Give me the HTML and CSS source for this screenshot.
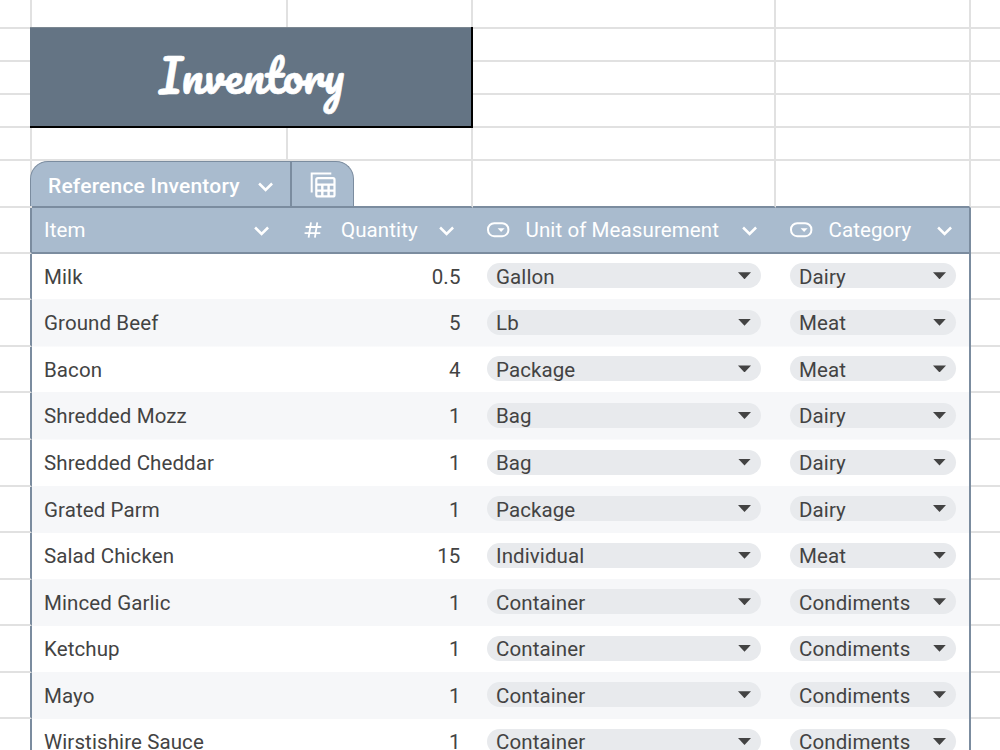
FILE: index.html
```html
<!DOCTYPE html>
<html lang="en">
<head>
    <meta charset="UTF-8">
    <meta name="viewport" content="width=device-width, initial-scale=1.0">
    <title>Inventory</title>
    <link rel="stylesheet" href="styles.css">
</head>
<body>
    <svg class="symbols">
        <symbol id="chevron" viewBox="0 0 16 16"><path d="M1.1 4.5l6.5 6.5 6.5-6.5" fill="none" stroke="#fff" stroke-width="2.5"/></symbol>
        <symbol id="dropdown" viewBox="0 0 24 16"><rect x="1" y="1.2" width="20.4" height="13" rx="6.2" fill="none" stroke="#fff" stroke-width="2"/><path d="M10.6 6.2h7l-3.5 3.8z" fill="#fff"/></symbol>
    </svg>

    <div class="sheet">
        <div class="row top">
            <div class="cell"></div><div class="cell"></div><div class="cell"></div><div class="cell"></div><div class="cell"></div><div class="cell"></div>
        </div>
        <div class="row banner">
            <div class="cell"></div><div class="title"><h1>Inventory</h1></div><div class="cell"></div><div class="cell"></div><div class="cell last"></div>
            <div class="cell"></div><div class="cell"></div><div class="cell"></div><div class="cell last"></div>
            <div class="cell"></div><div class="cell"></div><div class="cell"></div><div class="cell last"></div>
        </div>
        <div class="row spacer">
            <div class="cell"></div><div class="cell"></div><div class="cell"></div><div class="cell"></div><div class="cell"></div><div class="cell"></div>
        </div>
        <div class="row tabs">
            <div class="cell"></div>
            <div class="cell tab-cell">
                <div class="tab">
                    <div class="tab-name">Reference Inventory <svg class="chevron"><use href="#chevron"/></svg></div>
                    <div class="tab-icon">
                        <svg width="28" height="28" viewBox="0 0 28 28" fill="none" stroke="#fff">
                            <path d="M2.7 21.5V2.4h19.6" stroke-width="2"/>
                            <rect x="7.3" y="7.2" width="18.2" height="18.2" rx="1.5" stroke-width="2.2"/>
                            <path d="M7 13.6h19M7 19.6h19M13.3 13.5v12M19.6 13.5v12" stroke-width="2.4"/>
                        </svg>
                    </div>
                </div>
            </div>
            <div class="cell"></div><div class="cell"></div><div class="cell"></div>
        </div>

        <div class="row head">
            <div class="cell"></div>
            <div class="th item">Item <svg class="chevron"><use href="#chevron"/></svg></div>
            <div class="th quantity">
                <svg class="hash" viewBox="0 0 18 16" fill="none" stroke="#fff" stroke-width="1.8"><path d="M1.6 5h15.7M.6 11.2h15.7M7 .4L4.6 15.6M13.3.4l-2.4 15.2"/></svg>
                <span>Quantity</span> <svg class="chevron"><use href="#chevron"/></svg>
            </div>
            <div class="th unit"><svg class="dropdown"><use href="#dropdown"/></svg><span>Unit of Measurement</span> <svg class="chevron"><use href="#chevron"/></svg></div>
            <div class="th category"><svg class="dropdown"><use href="#dropdown"/></svg><span>Category</span> <svg class="chevron"><use href="#chevron"/></svg></div>
            <div class="cell"></div>
        </div>

        <div class="row data">
            <div class="cell"></div><div class="name">Milk</div><div class="number">0.5</div>
            <div class="select"><span class="chip">Gallon</span></div><div class="select"><span class="chip">Dairy</span></div><div class="cell"></div>
        </div>
        <div class="row data striped">
            <div class="cell"></div><div class="name">Ground Beef</div><div class="number">5</div>
            <div class="select"><span class="chip">Lb</span></div><div class="select"><span class="chip">Meat</span></div><div class="cell"></div>
        </div>
        <div class="row data">
            <div class="cell"></div><div class="name">Bacon</div><div class="number">4</div>
            <div class="select"><span class="chip">Package</span></div><div class="select"><span class="chip">Meat</span></div><div class="cell"></div>
        </div>
        <div class="row data striped">
            <div class="cell"></div><div class="name">Shredded Mozz</div><div class="number">1</div>
            <div class="select"><span class="chip">Bag</span></div><div class="select"><span class="chip">Dairy</span></div><div class="cell"></div>
        </div>
        <div class="row data">
            <div class="cell"></div><div class="name">Shredded Cheddar</div><div class="number">1</div>
            <div class="select"><span class="chip">Bag</span></div><div class="select"><span class="chip">Dairy</span></div><div class="cell"></div>
        </div>
        <div class="row data striped">
            <div class="cell"></div><div class="name">Grated Parm</div><div class="number">1</div>
            <div class="select"><span class="chip">Package</span></div><div class="select"><span class="chip">Dairy</span></div><div class="cell"></div>
        </div>
        <div class="row data">
            <div class="cell"></div><div class="name">Salad Chicken</div><div class="number">15</div>
            <div class="select"><span class="chip">Individual</span></div><div class="select"><span class="chip">Meat</span></div><div class="cell"></div>
        </div>
        <div class="row data striped">
            <div class="cell"></div><div class="name">Minced Garlic</div><div class="number">1</div>
            <div class="select"><span class="chip">Container</span></div><div class="select"><span class="chip">Condiments</span></div><div class="cell"></div>
        </div>
        <div class="row data">
            <div class="cell"></div><div class="name">Ketchup</div><div class="number">1</div>
            <div class="select"><span class="chip">Container</span></div><div class="select"><span class="chip">Condiments</span></div><div class="cell"></div>
        </div>
        <div class="row data striped">
            <div class="cell"></div><div class="name">Mayo</div><div class="number">1</div>
            <div class="select"><span class="chip">Container</span></div><div class="select"><span class="chip">Condiments</span></div><div class="cell"></div>
        </div>
        <div class="row data">
            <div class="cell"></div><div class="name">Wirstishire Sauce</div><div class="number">1</div>
            <div class="select"><span class="chip">Container</span></div><div class="select"><span class="chip">Condiments</span></div><div class="cell"></div>
        </div>
    </div>
</body>
</html>
```
FILE: styles.css
```css
body {
    margin: 0;
    height: 100vh;
    overflow: hidden;
    background: white;
    font-family: Roboto, "Liberation Sans", sans-serif;
    font-size: 20.5px;
    letter-spacing: 0.1px;
    color: #434343;
}

.symbols {
    display: none;
}

.sheet {
    width: 1000px;
}

.row {
    display: grid;
    grid-template-columns: 32px 256px 185px 303px 195px 29px;
}

.cell {
    box-sizing: border-box;
    border-right: 2px solid #e1e1e1;
    border-bottom: 2px solid #e1e1e1;
}

.row .cell:last-child,
.row .cell.last {
    border-right: none;
}

.top {
    height: 29px;
}

.banner {
    grid-template-rows: 33px 33px 33px;
}

.spacer {
    height: 33px;
}

/* merged title cell */
.title {
    grid-row: 1 / 4;
    grid-column: 2 / 4;
    position: relative;
    margin: -2px 0 0 -2px;
    background: #647484;
    box-shadow: inset 0 1px #7b8791;
    border-right: 2px solid #000;
    border-bottom: 2px solid #000;
    display: flex;
    justify-content: center;
    align-items: center;
}

.title h1 {
    margin: 0 0 1px 2px;
    color: white;
    font-family: Pacifico, Lato, cursive;
    font-size: 45.3px;
    font-weight: 400;
    letter-spacing: 0;
    line-height: 1;
    -webkit-text-stroke: 0.6px white;
}

/* table tab */
.tabs {
    height: 46.6px;
}

.tabs .cell {
    border-bottom-color: #7b8c9f;
}

.tabs .cell:first-child,
.tabs .cell:last-child {
    border-bottom-color: #e1e1e1;
}

.tabs .tab-cell {
    grid-column: 2 / 4;
}

.tab {
    box-sizing: border-box;
    width: 324px;
    height: 45px;
    margin-left: -2px;
    display: flex;
    background: #a9bbce;
    border: 1px solid #7b8c9f;
    border-bottom: none;
    border-radius: 18px 18px 0 0;
    color: white;
    font-weight: 500;
    font-size: 21px;
    letter-spacing: 0.2px;
}

.tab-name {
    box-sizing: border-box;
    width: 261px;
    padding: 3px 16px 0 17px;
    display: flex;
    justify-content: space-between;
    align-items: center;
    border-right: 2px solid #7b8c9f;
}

.tab-icon {
    flex: 1;
    display: flex;
    justify-content: center;
    align-items: center;
    padding-top: 2px;
}

.chevron {
    width: 16px;
    height: 16px;
    position: relative;
    top: 1px;
}

/* table header */
.head {
    height: 46.2px;
    color: white;
}

.head .cell:first-child,
.data .cell:first-child {
    border-right-color: #7b8c9f;
}

.th {
    background: #a9bbce;
    border-bottom: 2px solid #7b8c9f;
    display: flex;
    align-items: center;
    padding: 0 18.5px 0 13.5px;
}

.th .chevron {
    margin-left: auto;
}

.th.item {
    padding-left: 12px;
}

.th.quantity {
    padding-left: 16px;
}

.hash {
    width: 18px;
    height: 16px;
    margin-right: 19px;
}

.dropdown {
    width: 24px;
    height: 16px;
    margin-right: 15px;
}

.th.category {
    padding-right: 16px;
    border-right: 2px solid #7b8c9f;
}

/* table rows */
.data {
    height: 46.57px;
    line-height: 46.4px;
    background: linear-gradient(#f6f7f9, #f6f7f9) 32px 100% / 938px 1px no-repeat;
}

.striped {
    background-size: 938px 100%;
}

.name {
    padding-left: 12px;
}

.number {
    padding-right: 12.5px;
    text-align: right;
}

.select {
    padding: 9.5px 15px 0 14px;
}

.select:nth-child(5) {
    padding-right: 13px;
    border-right: 2px solid #7b8c9f;
}

.chip {
    box-sizing: border-box;
    display: flex;
    justify-content: space-between;
    align-items: center;
    height: 25px;
    padding: 3px 10px 0 9px;
    border-radius: 13px;
    background: #e8eaed;
    line-height: 25px;
}

.chip::after {
    content: "";
    width: 13px;
    height: 7px;
    margin-top: -3px;
    background: #434343;
    clip-path: polygon(0 0, 100% 0, 50% 100%);
}
```
